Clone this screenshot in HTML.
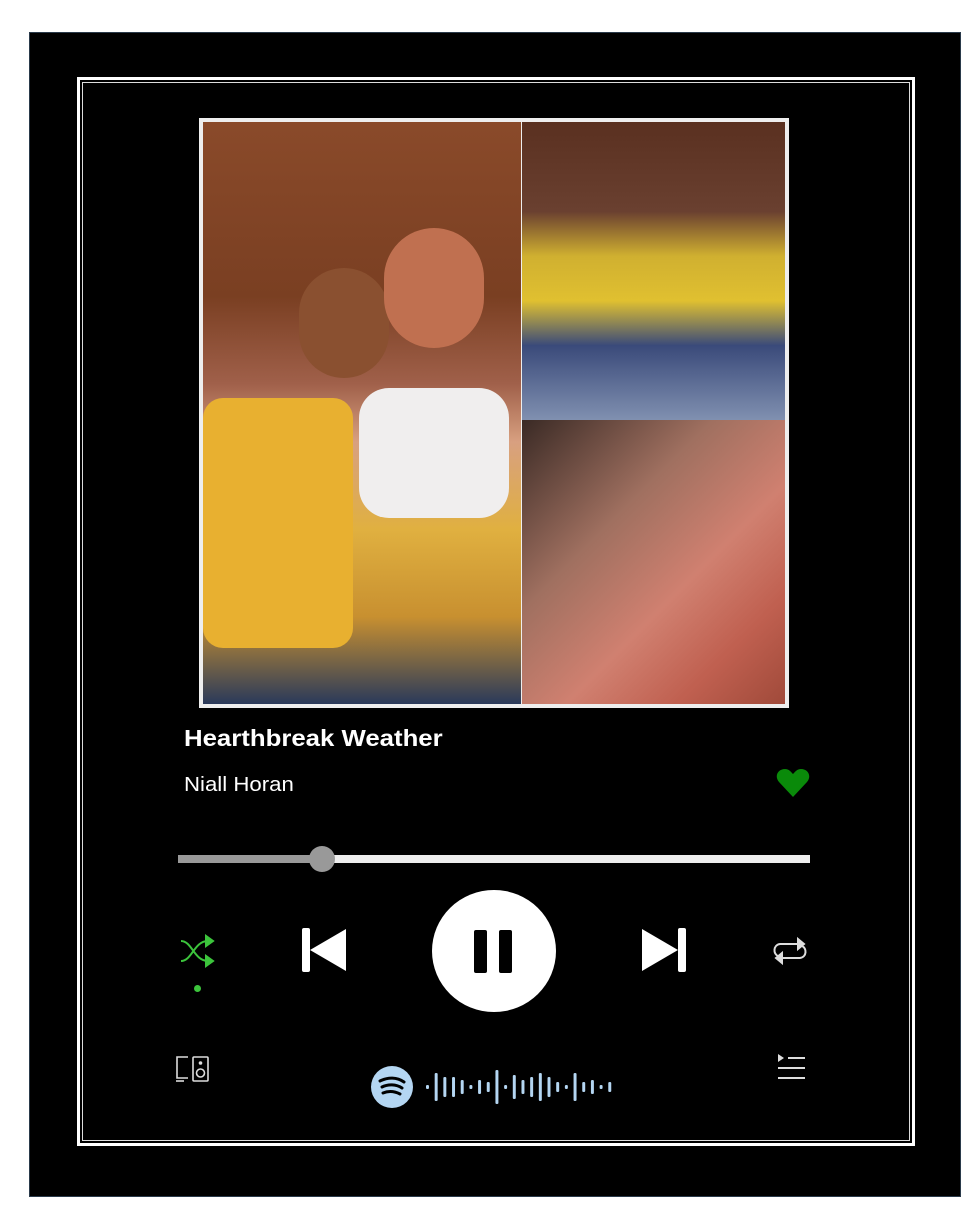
<!DOCTYPE html>
<html><head><meta charset="utf-8"><style>
*{margin:0;padding:0;box-sizing:border-box}
body{width:974px;height:1219px;background:#fff;position:relative;overflow:hidden;font-family:"Liberation Sans",sans-serif}
.a{position:absolute}
</style></head><body>
<div class="a" style="left:29px;top:32px;width:932px;height:1165px;background:#000;border:1px solid #2a3a4a"></div>
<div class="a" style="left:77px;top:77px;width:838px;height:1069px;border:3px solid #fff"></div>
<div class="a" style="left:82px;top:82px;width:828px;height:1059px;border:1px solid #ddd"></div>
<!-- photo -->
<div class="a" style="left:199px;top:118px;width:590px;height:590px;background:#eee;padding:4px">
 <div class="a" style="left:4px;top:4px;width:318px;height:582px;background:linear-gradient(180deg,#8a4a2a 0%,#7a3f22 30%,#a0604a 45%,#d8a080 55%,#e0b040 70%,#c89030 85%,#2a3a5a 100%)"></div>
 <div class="a" style="left:100px;top:150px;width:90px;height:110px;border-radius:45px;background:#8a5030"></div>
 <div class="a" style="left:185px;top:110px;width:100px;height:120px;border-radius:50px;background:#c07050"></div>
 <div class="a" style="left:160px;top:270px;width:150px;height:130px;border-radius:30px;background:#f0eeee"></div>
 <div class="a" style="left:4px;top:280px;width:150px;height:250px;background:#e8b030;border-radius:20px"></div>
 <div class="a" style="left:323px;top:4px;width:263px;height:298px;background:linear-gradient(180deg,#5a3020 0%,#6a4030 30%,#d0b030 45%,#e0c030 60%,#3a4a7a 75%,#8090b0 100%)"></div>
 <div class="a" style="left:323px;top:302px;width:263px;height:284px;background:linear-gradient(135deg,#3a2a25 0%,#a07060 35%,#d08070 60%,#c06050 80%,#a04a3a 100%)"></div>
</div>
<div class="a" style="left:184px;top:725px;color:#fff;font-weight:bold;font-size:23px;transform:scaleX(1.12);transform-origin:0 0;white-space:nowrap">Hearthbreak Weather</div>
<div class="a" style="left:184px;top:774px;color:#fff;font-size:20px;transform:scaleX(1.11);transform-origin:0 0;white-space:nowrap">Niall Horan</div>
<svg class="a" style="left:776px;top:768px" width="34" height="30" viewBox="0 0 34 30"><path d="M17 29 L3 14 C-2 8 2 1 9 1 C13 1 15 4 17 6 C19 4 21 1 25 1 C32 1 36 8 31 14 Z" fill="#0a8a0a"/></svg>
<div class="a" style="left:178px;top:855px;width:632px;height:8px;background:#eee"></div>
<div class="a" style="left:178px;top:855px;width:144px;height:8px;background:#999"></div>
<div class="a" style="left:309px;top:846px;width:26px;height:26px;border-radius:50%;background:#999"></div>
<!-- controls -->
<svg class="a" style="left:178px;top:934px" width="40" height="34" viewBox="0 0 40 34" fill="none" stroke="#3cc43c" stroke-width="2"><path d="M3 7 C14 7 16 27 30 27 M3 27 C14 27 16 7 30 7"/><path d="M28 2 L35 7 L28 12 Z M28 22 L35 27 L28 32 Z" fill="#3cc43c"/></svg>
<div class="a" style="left:194px;top:985px;width:7px;height:7px;border-radius:50%;background:#3cc43c"></div>
<svg class="a" style="left:300px;top:926px" width="48" height="48" viewBox="0 0 48 48"><rect x="2" y="2" width="8" height="44" rx="2" fill="#fff"/><path d="M10 24 L46 3 L46 45 Z" fill="#fff"/></svg>
<div class="a" style="left:432px;top:890px;width:124px;height:122px;border-radius:50%;background:#fff"></div>
<div class="a" style="left:474px;top:930px;width:13px;height:43px;background:#000;border-radius:2px"></div>
<div class="a" style="left:499px;top:930px;width:13px;height:43px;background:#000;border-radius:2px"></div>
<svg class="a" style="left:640px;top:926px" width="48" height="48" viewBox="0 0 48 48"><rect x="38" y="2" width="8" height="44" rx="2" fill="#fff"/><path d="M38 24 L2 3 L2 45 Z" fill="#fff"/></svg>
<svg class="a" style="left:770px;top:934px" width="40" height="34" viewBox="0 0 40 34" fill="none" stroke="#ddd" stroke-width="2"><path d="M8 22 C3 20 3 11 10 10 H30"/><path d="M32 12 C37 14 37 23 30 24 H10"/><path d="M28 5 L34 10 L28 15 Z M12 19 L6 24 L12 29 Z" fill="#ddd"/></svg>
<!-- bottom -->
<svg class="a" style="left:174px;top:1054px" width="38" height="30" viewBox="0 0 38 30" fill="none" stroke="#ddd" stroke-width="1.6"><path d="M14 3 H3 V24 H14"/><path d="M2 27 H10"/><rect x="19" y="3" width="15" height="24" rx="1"/><circle cx="26.5" cy="19" r="4"/><circle cx="26.5" cy="9" r="1" fill="#ddd"/></svg>
<svg class="a" style="left:775px;top:1052px" width="32" height="30" viewBox="0 0 32 30"><path d="M3 2 L9 6 L3 10 Z" fill="#ddd"/><path d="M13 6 H30 M3 16 H30 M3 26 H30" stroke="#ddd" stroke-width="2"/></svg>
<svg class="a" style="left:370px;top:1064px" width="250" height="46" viewBox="0 0 250 46">
<circle cx="22" cy="23" r="21" fill="#b4d6f2"/>
<path d="M10 17 C18 13 27 13 34 18 M12 23 C18 20 26 20 32 24 M13 29 C18 27 24 27 30 30" stroke="#000" stroke-width="3" fill="none" stroke-linecap="round"/>
<g fill="#b4d6f2" transform="translate(56 0) scale(1.24 1) translate(-56 0)">
<rect x="56" y="21" width="2.4" height="4" rx="1"/>
<rect x="63" y="9" width="2.4" height="28" rx="1"/>
<rect x="70" y="13" width="2.4" height="20" rx="1"/>
<rect x="77" y="13" width="2.4" height="20" rx="1"/>
<rect x="84" y="16" width="2.4" height="14" rx="1"/>
<rect x="91" y="21" width="2.4" height="4" rx="1"/>
<rect x="98" y="16" width="2.4" height="14" rx="1"/>
<rect x="105" y="18" width="2.4" height="10" rx="1"/>
<rect x="112" y="6" width="2.4" height="34" rx="1"/>
<rect x="119" y="21" width="2.4" height="4" rx="1"/>
<rect x="126" y="11" width="2.4" height="24" rx="1"/>
<rect x="133" y="16" width="2.4" height="14" rx="1"/>
<rect x="140" y="13" width="2.4" height="20" rx="1"/>
<rect x="147" y="9" width="2.4" height="28" rx="1"/>
<rect x="154" y="13" width="2.4" height="20" rx="1"/>
<rect x="161" y="18" width="2.4" height="10" rx="1"/>
<rect x="168" y="21" width="2.4" height="4" rx="1"/>
<rect x="175" y="9" width="2.4" height="28" rx="1"/>
<rect x="182" y="18" width="2.4" height="10" rx="1"/>
<rect x="189" y="16" width="2.4" height="14" rx="1"/>
<rect x="196" y="21" width="2.4" height="4" rx="1"/>
<rect x="203" y="18" width="2.4" height="10" rx="1"/>
</g></svg>
</body></html>
